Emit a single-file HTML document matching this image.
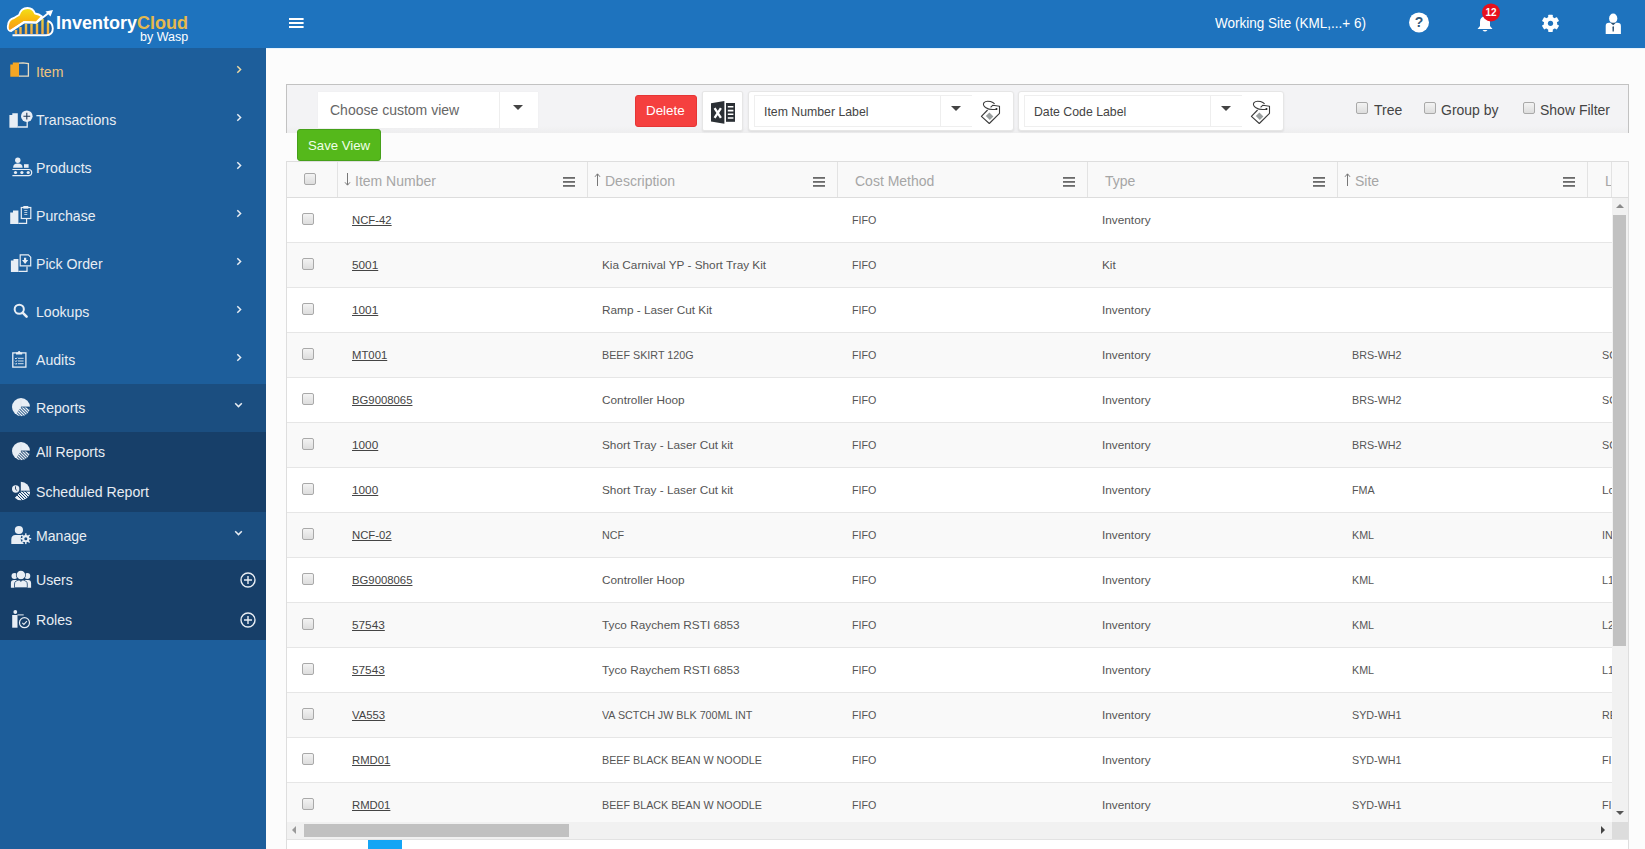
<!DOCTYPE html>
<html><head><meta charset="utf-8">
<style>
*{box-sizing:border-box;margin:0;padding:0}
html,body{width:1645px;height:849px;overflow:hidden;background:#fcfcfc;font-family:"Liberation Sans",sans-serif;position:relative}
.abs{position:absolute}
#hdr{position:absolute;left:0;top:0;width:1645px;height:48px;background:#1e73be}
#side{position:absolute;left:0;top:48px;width:266px;height:801px;background:#1d5e9b}
.st{position:absolute;left:36px;font-size:15px;line-height:20px;white-space:nowrap;transform:scaleX(0.94);transform-origin:0 0}
#tb{position:absolute;left:286px;top:84px;width:1343px;height:49px;background:linear-gradient(#f3f3f5 85%,#eeeeef);border:1px solid #c2c2c2;border-bottom:none}
#grid{position:absolute;left:286px;top:161px;width:1343px;height:700px;background:#fff;border:1px solid #dedede}
#ghead{position:absolute;left:287px;top:162px;width:1341px;height:36px;background:#f9f9f9;border-bottom:1px solid #dddddd}
.ht{position:absolute;top:173px;font-size:14px;color:#a6a6a6;white-space:nowrap;line-height:17px}
.row{position:absolute;left:287px;width:1325px;height:45px;border-bottom:1px solid #e6e6e6;overflow:hidden}
.c{position:absolute;top:15px;font-size:11.8px;color:#555;white-space:nowrap;line-height:14px;transform-origin:0 50%}
.u{transform:scaleX(0.91)}
.ul{transform:scaleX(0.96)}
.lnk{color:#444;text-decoration:underline}
.cb{position:absolute;width:12px;height:12px;border:1px solid #a9a9a9;border-radius:2px;background:linear-gradient(#f3f3f3,#dddddd)}
.row .cb{top:15px}
.wbox{position:absolute;background:#fff;border:1px solid #e6e6e6;border-radius:3px;box-shadow:0 1px 2px rgba(0,0,0,0.08)}
.tri{position:absolute;width:0;height:0;border-left:5px solid transparent;border-right:5px solid transparent;border-top:5px solid #444}
.lbl{position:absolute;font-size:14px;color:#444;white-space:nowrap;line-height:17px}
</style></head><body>
<div id="hdr">
  <svg class="abs" style="left:5px;top:5px" width="52" height="35" viewBox="5 5 52 35">
    <defs><linearGradient id="cg" x1="0" y1="0" x2="0" y2="1"><stop offset="0" stop-color="#f2e21a"/><stop offset="0.5" stop-color="#f9b90e"/><stop offset="1" stop-color="#f7981c"/></linearGradient>
    <linearGradient id="bg2" x1="0" y1="0" x2="0" y2="1"><stop offset="0" stop-color="#e6d040"/><stop offset="1" stop-color="#f2a640"/></linearGradient></defs>
    <path d="M10 31 Q7 30 8 25 Q9 19 14 18 Q17 16 19 15 Q21 8 27.5 8 Q33 8 35 13.5 Q39 14 42 16.5 L36.3 22.3 L24 22 Z" fill="url(#cg)" stroke="#fff" stroke-width="1.8" stroke-linejoin="round"/>
    <path d="M14 34 L24 23.5 L36.3 24 L46 15.5 L48 22 Q53 23 52.5 29 Q52 34.5 46 34.5 Z" fill="#1c5fa0"/>
    <path d="M16 34 V30 M20.5 34 V27 M26 34 V24 M31.5 34 V24 M37 34 V23.5 M42.5 34 V19 M48 34 V22" stroke="url(#bg2)" stroke-width="2.4"/>
    <path d="M10.4 31.4 L24 22.3 L36.3 22.7 L48.5 13" fill="none" stroke="#fff" stroke-width="2"/>
    <path d="M45.5 11.5 L53 10 L50.5 16.5 Z" fill="#fff"/>
    <path d="M12.5 35.3 L46 35.3 Q52.8 35 52.8 28.5 Q52.5 22 47.5 21" fill="none" stroke="#fff" stroke-width="1.9"/>
  </svg>
  <div class="abs" style="left:56px;top:12px;font-size:18px;font-weight:bold;color:#fff;white-space:nowrap;line-height:22px">Inventory<span style="color:#e5b94e">Cloud</span></div>
  <div class="abs" style="left:140px;top:30px;font-size:12.5px;color:#fff;white-space:nowrap;line-height:14px">by Wasp</div>
  <svg class="abs" style="left:289px;top:18px" width="15" height="10" viewBox="0 0 15 10"><rect y="0" width="14.6" height="2" fill="#fff"/><rect y="4" width="14.6" height="2" fill="#fff"/><rect y="8" width="14.6" height="2" fill="#fff"/></svg>
  <div class="abs" style="left:1215px;top:13px;font-size:14.6px;color:#fff;white-space:nowrap;line-height:20px;transform:scaleX(0.925);transform-origin:0 0">Working Site (KML,...+ 6)</div>
  <!-- help -->
  <svg class="abs" style="left:1408px;top:12px" width="22" height="21" viewBox="0 0 22 21"><circle cx="11" cy="10.4" r="10" fill="#fff"/><text x="11" y="15.4" text-anchor="middle" font-family="Liberation Sans" font-weight="bold" font-size="14" fill="#35597a">?</text></svg>
  <!-- bell -->
  <svg class="abs" style="left:1476px;top:15px" width="18" height="18" viewBox="0 0 18 18"><path d="M9 1.5 Q14 1.5 14 7 L14 11 L16.5 14 L1.5 14 L4 11 L4 7 Q4 1.5 9 1.5 Z" fill="#fff"/><path d="M6.5 15 Q9 18 11.5 15 Z" fill="#fff"/></svg>
  <svg class="abs" style="left:1481px;top:3px" width="20" height="19" viewBox="0 0 20 19"><circle cx="10" cy="9.4" r="9" fill="#e8101c"/><text x="10" y="13.2" text-anchor="middle" font-family="Liberation Sans" font-weight="bold" font-size="10" fill="#fff">12</text></svg>
  <!-- gear -->
  <svg class="abs" style="left:1541px;top:14px" width="19" height="19" viewBox="0 0 19 19"><g transform="translate(9.5 9.3)" fill="#fff"><circle r="6.6"/><rect x="-2.3" y="-8.6" width="4.6" height="17.2" rx="0.6" transform="rotate(0)"/><rect x="-2.3" y="-8.6" width="4.6" height="17.2" rx="0.6" transform="rotate(60)"/><rect x="-2.3" y="-8.6" width="4.6" height="17.2" rx="0.6" transform="rotate(120)"/></g><circle cx="9.5" cy="9.3" r="2.6" fill="#1e73be"/></svg>
  <!-- user -->
  <svg class="abs" style="left:1604px;top:12px" width="19" height="23" viewBox="0 0 19 23"><ellipse cx="9.2" cy="6.4" rx="4.1" ry="4.9" fill="#fff"/><path d="M1.7 22 L1.7 14 Q1.7 10.8 5 10.8 L13.4 10.8 Q16.9 10.8 16.9 14 L16.9 22 Z" fill="#fff"/><path d="M6.5 10.8 L9.2 13.3 L11.9 10.8 Z" fill="#2a5070"/><path d="M9.2 14 L8.4 15 L8.6 19.5 L9.8 19.5 L10 15 Z" fill="#2a5070"/></svg>
</div>
<div class="abs" style="left:266px;top:48px;width:1379px;height:1px;background:#e8f3fc"></div>
<div id="side">
  <div class="abs" style="left:0;top:336px;width:266px;height:48px;background:#1b4e80"></div>
  <div class="abs" style="left:0;top:384px;width:266px;height:80px;background:#173f69"></div>
  <div class="abs" style="left:0;top:464px;width:266px;height:48px;background:#1b4e80"></div>
  <div class="abs" style="left:0;top:512px;width:266px;height:80px;background:#173f69"></div>
</div>
<svg class="abs" style="left:6px;top:58px" width="28" height="22" viewBox="6 58 28 22"><path d="M10.3 64.5 L12.8 64.5 L12.8 62.6 L19 62.6 L19 76.8 L10.3 76.8 Z" fill="#f5a623"/><path d="M19 63.2 L23 62.8 L28.4 63.6 L28.4 76.1 L19 76.1" fill="none" stroke="#e9dcc0" stroke-width="1.3"/></svg>
<div class="st" style="top:62px;color:#efc47f">Item</div>
<svg class="abs" style="left:236px;top:65px" width="7" height="9" viewBox="0 0 7 9"><path d="M1.3 1.2 L4.6 4.5 L1.3 7.8" fill="none" stroke="#eed9a2" stroke-width="1.5"/></svg>
<svg class="abs" style="left:6px;top:106px" width="30" height="26" viewBox="6 106 30 26"><path d="M9.4 115 L12.3 115 L12.3 113.2 L17.8 113.2 L17.8 127.7 L9.4 127.7 Z" fill="#e8eef5"/><path d="M17.8 127 L27.2 127 L27.2 121" fill="none" stroke="#e8eef5" stroke-width="1.3"/><circle cx="26.8" cy="116.2" r="5.8" fill="#e8eef5"/><path d="M26.8 112.8 V119.6 M23.4 116.2 H30.2" stroke="#1f3a5a" stroke-width="1.1"/></svg>
<div class="st" style="top:110px;color:#e8edf3">Transactions</div>
<svg class="abs" style="left:236px;top:113px" width="7" height="9" viewBox="0 0 7 9"><path d="M1.3 1.2 L4.6 4.5 L1.3 7.8" fill="none" stroke="#e8edf3" stroke-width="1.5"/></svg>
<svg class="abs" style="left:8px;top:154px" width="28" height="26" viewBox="8 154 28 26"><circle cx="17.8" cy="160.3" r="2.7" fill="#e8eef5"/><path d="M13.1 167.8 Q13.1 163.6 17.8 163.6 Q22.6 163.6 22.6 167.8 Z" fill="#e8eef5"/><rect x="24" y="164.2" width="4.6" height="3.6" fill="#e8eef5"/><path d="M12.4 169.5 L28.6 169.5 Q31.7 169.5 31.7 172.5 Q31.7 175.6 28.6 175.6 L12.4 175.6" fill="none" stroke="#e8eef5" stroke-width="1.2"/><circle cx="15.5" cy="172.5" r="1.6" fill="#e8eef5"/><circle cx="21.9" cy="172.5" r="1.6" fill="#e8eef5"/><circle cx="28.2" cy="172.5" r="1.6" fill="#e8eef5"/></svg>
<div class="st" style="top:158px;color:#e8edf3">Products</div>
<svg class="abs" style="left:236px;top:161px" width="7" height="9" viewBox="0 0 7 9"><path d="M1.3 1.2 L4.6 4.5 L1.3 7.8" fill="none" stroke="#e8edf3" stroke-width="1.5"/></svg>
<svg class="abs" style="left:6px;top:202px" width="30" height="26" viewBox="6 202 30 26"><path d="M10.2 212.4 L13 212.4 L13 210.6 L18.4 210.6 L18.4 224 L10.2 224 Z" fill="#e8eef5"/><path d="M18.4 223.4 L26.6 223.4 L26.6 219" fill="none" stroke="#e8eef5" stroke-width="1.2"/><rect x="21.3" y="207.5" width="9.5" height="11" fill="#1d5e9b" stroke="#e8eef5" stroke-width="1.2"/><rect x="23.3" y="206" width="5" height="2.6" fill="#e8eef5"/><path d="M24.3 210.5 H27.3 M24.3 212.5 H27.3 M24.3 214.5 H27.3" stroke="#e8eef5" stroke-width="0.9" opacity="0.85"/></svg>
<div class="st" style="top:206px;color:#e8edf3">Purchase</div>
<svg class="abs" style="left:236px;top:209px" width="7" height="9" viewBox="0 0 7 9"><path d="M1.3 1.2 L4.6 4.5 L1.3 7.8" fill="none" stroke="#e8edf3" stroke-width="1.5"/></svg>
<svg class="abs" style="left:6px;top:250px" width="30" height="26" viewBox="6 250 30 26"><path d="M10.9 260.6 L13.5 260.6 L13.5 259 L18.4 259 L18.4 272 L10.9 272 Z" fill="#e8eef5"/><path d="M18.4 271.4 L27 271.4 L27 266.5" fill="none" stroke="#e8eef5" stroke-width="1.2"/><path d="M20.2 254.8 L28.3 254.8 L30.7 257.2 L30.7 265.8 L20.2 265.8 Z" fill="#1d5e9b" stroke="#e8eef5" stroke-width="1.2"/><path d="M24 257.8 L26.2 257.8 L26.2 260 L28.2 260 L25.1 263.9 L22 260 L24 260 Z" fill="#e8eef5"/></svg>
<div class="st" style="top:254px;color:#e8edf3">Pick Order</div>
<svg class="abs" style="left:236px;top:257px" width="7" height="9" viewBox="0 0 7 9"><path d="M1.3 1.2 L4.6 4.5 L1.3 7.8" fill="none" stroke="#e8edf3" stroke-width="1.5"/></svg>
<svg class="abs" style="left:8px;top:298px" width="24" height="24" viewBox="8 298 24 24"><circle cx="19.25" cy="309.25" r="4.6" fill="none" stroke="#e8eef5" stroke-width="2"/><path d="M22.6 312.6 L26.6 316.6" stroke="#e8eef5" stroke-width="2.6" stroke-linecap="round"/></svg>
<div class="st" style="top:302px;color:#e8edf3">Lookups</div>
<svg class="abs" style="left:236px;top:305px" width="7" height="9" viewBox="0 0 7 9"><path d="M1.3 1.2 L4.6 4.5 L1.3 7.8" fill="none" stroke="#e8edf3" stroke-width="1.5"/></svg>
<svg class="abs" style="left:8px;top:346px" width="24" height="26" viewBox="8 346 24 26"><rect x="12.8" y="352.9" width="13.1" height="14.2" fill="none" stroke="#e8eef5" stroke-width="1.3"/><path d="M16 354.6 L16 352.4 L17.6 352.4 Q19.1 349.8 20.6 352.4 L22.2 352.4 L22.2 354.6 Z" fill="#e8eef5"/><path d="M15 358 L16 359 L17 357.6 M18 358.3 H23.6 M15 360.7 L16 361.7 L17 360.3 M18 361 H23.6 M15 363.4 L16 364.4 L17 363 M18 363.7 H23.6" stroke="#e8eef5" stroke-width="0.9" fill="none"/></svg>
<div class="st" style="top:350px;color:#e8edf3">Audits</div>
<svg class="abs" style="left:236px;top:353px" width="7" height="9" viewBox="0 0 7 9"><path d="M1.3 1.2 L4.6 4.5 L1.3 7.8" fill="none" stroke="#e8edf3" stroke-width="1.5"/></svg>
<svg class="abs" style="left:10px;top:396px" width="22" height="22" viewBox="10 396 22 22"><defs><clipPath id="cp407"><path d="M21 407 L30 407 A9 9 0 0 1 15.3 414 Z"/></clipPath></defs><circle cx="21" cy="407" r="9" fill="#e8eef5"/><path d="M21 407 L30.5 407 L30.5 417 L14 417 Z" fill="#1b4e80" clip-path="url(#cp407)"/><g clip-path="url(#cp407)" stroke="#e8eef5" stroke-width="1.3"><path d="M13 404 L26 417 M16 404 L29 417 M19 404 L32 417 M22 404 L35 417 M10 404 L23 417 M7 404 L20 417"/></g><path d="M21 398 V407" stroke="#d8dde5" stroke-width="0.6"/><path d="M21 407 L30 407" stroke="#1b4e80" stroke-width="0.8"/></svg>
<div class="st" style="top:398px;color:#e8edf3">Reports</div>
<svg class="abs" style="left:234px;top:402px" width="9" height="7" viewBox="0 0 9 7"><path d="M1.2 1.3 L4.5 4.6 L7.8 1.3" fill="none" stroke="#e8edf3" stroke-width="1.5"/></svg>
<svg class="abs" style="left:10px;top:440px" width="22" height="22" viewBox="10 440 22 22"><defs><clipPath id="cp451"><path d="M21 451 L30 451 A9 9 0 0 1 15.3 458 Z"/></clipPath></defs><circle cx="21" cy="451" r="9" fill="#e8eef5"/><path d="M21 451 L30.5 451 L30.5 461 L14 461 Z" fill="#173f69" clip-path="url(#cp451)"/><g clip-path="url(#cp451)" stroke="#e8eef5" stroke-width="1.3"><path d="M13 448 L26 461 M16 448 L29 461 M19 448 L32 461 M22 448 L35 461 M10 448 L23 461 M7 448 L20 461"/></g><path d="M21 442 V451" stroke="#d8dde5" stroke-width="0.6"/><path d="M21 451 L30 451" stroke="#173f69" stroke-width="0.8"/></svg>
<div class="st" style="top:442px;color:#e8edf3">All Reports</div>
<svg class="abs" style="left:10px;top:479px" width="24" height="24" viewBox="10 479 24 24"><defs><clipPath id="cps"><path d="M21 491 L30.2 491 A9.2 9.2 0 0 1 14.5 497.5 Z"/></clipPath></defs><path d="M20.8 491 L20.8 481.8 A9.2 9.2 0 0 1 30 491 Z" fill="#e8eef5"/><path d="M21 491 L30.5 491 L30.5 501 L12 501 Z" fill="#e8eef5" clip-path="url(#cps)"/><g clip-path="url(#cps)" stroke="#173f69" stroke-width="1"><path d="M10 488 L23 501 M13 488 L26 501 M16 488 L29 501 M19 488 L32 501 M22 488 L35 501"/></g><path d="M20.8 491.2 H31" stroke="#173f69" stroke-width="0.9"/><circle cx="15.7" cy="489" r="4.4" fill="#173f69"/><circle cx="15.7" cy="489" r="3.7" fill="#e8eef5"/><path d="M15.5 486.3 V489.3 L17.2 490.6" stroke="#1f3a5a" stroke-width="0.9" fill="none"/></svg>
<div class="st" style="top:482px;color:#e8edf3">Scheduled Report</div>
<svg class="abs" style="left:8px;top:523px" width="26" height="26" viewBox="8 523 26 26"><circle cx="18.9" cy="530" r="4.1" fill="#e8eef5"/><path d="M11.3 544 L11.3 539.5 Q11.3 535 15.5 535 L22 535 Q24 535 24 538 L24 544 Z" fill="#e8eef5"/><circle cx="25.8" cy="538.7" r="5.2" fill="#1b4e80"/><g fill="#e8eef5"><rect x="25.1" y="533.3" width="1.4" height="10.8" transform="rotate(0 25.8 538.7)"/><rect x="25.1" y="533.3" width="1.4" height="10.8" transform="rotate(45 25.8 538.7)"/><rect x="25.1" y="533.3" width="1.4" height="10.8" transform="rotate(90 25.8 538.7)"/><rect x="25.1" y="533.3" width="1.4" height="10.8" transform="rotate(135 25.8 538.7)"/></g><circle cx="25.8" cy="538.7" r="3.6" fill="#e8eef5"/><circle cx="25.8" cy="538.7" r="1.5" fill="#1b4e80"/></svg>
<div class="st" style="top:526px;color:#e8edf3">Manage</div>
<svg class="abs" style="left:234px;top:530px" width="9" height="7" viewBox="0 0 9 7"><path d="M1.2 1.3 L4.5 4.6 L7.8 1.3" fill="none" stroke="#e8edf3" stroke-width="1.5"/></svg>
<svg class="abs" style="left:8px;top:567px" width="26" height="24" viewBox="8 567 26 24"><circle cx="14.5" cy="576" r="3" fill="#e8eef5"/><circle cx="27.3" cy="576" r="3" fill="#e8eef5"/><path d="M10.9 587.7 L10.9 583 Q10.9 580 14 580 L28 580 Q31.1 580 31.1 583 L31.1 587.7 Z" fill="#e8eef5"/><circle cx="20.9" cy="575" r="5" fill="#173f69"/><circle cx="20.9" cy="575" r="4.3" fill="#e8eef5"/><path d="M14.5 587.7 L14.5 584 Q14.5 580 20.9 580 Q27.3 580 27.3 584 L27.3 587.7 Z" fill="#e8eef5" stroke="#173f69" stroke-width="0.8"/><path d="M19.5 580.2 L20.9 582 L22.3 580.2 Z" fill="#173f69"/></svg>
<div class="st" style="top:570px;color:#e8edf3">Users</div>
<svg class="abs" style="left:240px;top:572px" width="16" height="16" viewBox="0 0 16 16"><circle cx="8" cy="8" r="7" fill="none" stroke="#e8edf3" stroke-width="1.4"/><path d="M8 4 V12 M4 8 H12" stroke="#e8edf3" stroke-width="1.4"/></svg>
<svg class="abs" style="left:8px;top:607px" width="26" height="24" viewBox="8 607 26 24"><circle cx="15.3" cy="612" r="1.9" fill="#e8eef5"/><rect x="12.2" y="615" width="5.3" height="12.7" fill="#e8eef5"/><path d="M17.5 614.9 H23.7" stroke="#e8eef5" stroke-width="1"/><circle cx="24.5" cy="622.7" r="5" fill="none" stroke="#e8eef5" stroke-width="1.2"/><path d="M22.3 622.8 L23.9 624.4 L26.9 621.2" stroke="#e8eef5" stroke-width="1.1" fill="none"/></svg>
<div class="st" style="top:610px;color:#e8edf3">Roles</div>
<svg class="abs" style="left:240px;top:612px" width="16" height="16" viewBox="0 0 16 16"><circle cx="8" cy="8" r="7" fill="none" stroke="#e8edf3" stroke-width="1.4"/><path d="M8 4 V12 M4 8 H12" stroke="#e8edf3" stroke-width="1.4"/></svg>
<div id="tb"></div>
<!-- choose custom view -->
<div class="abs" style="left:318px;top:92px;width:220px;height:36px;background:#fff;box-shadow:0 0 1px rgba(0,0,0,0.06)"></div>
<div class="abs" style="left:499px;top:92px;width:1px;height:36px;background:#eeeeee"></div>
<div class="lbl" style="left:330px;top:102px;color:#666">Choose custom view</div>
<div class="tri" style="left:513px;top:105px;border-top-color:#444"></div>
<!-- delete -->
<div class="abs" style="left:635px;top:95px;width:62px;height:32px;background:#f5403f;border-radius:3px;border:1px solid #e53535"></div>
<div class="abs" style="left:646px;top:102px;font-size:13.4px;color:#fff;line-height:17px;white-space:nowrap">Delete</div>
<!-- excel -->
<div class="wbox" style="left:702px;top:91px;width:41px;height:40px;border-radius:2px"></div>
<svg class="abs" style="left:708px;top:98px" width="30" height="28" viewBox="708 98 30 28"><path d="M711 103.2 L724.4 101 L724.4 123.7 L711 121.5 Z" fill="#2b3035"/><rect x="726" y="103" width="9" height="18.8" fill="#2b3035"/><path d="M727.8 106.8 H733.4 M727.8 110.6 H733.4 M727.8 114.3 H733.4 M727.8 118 H733.4" stroke="#fff" stroke-width="1.6"/><path d="M714.6 108.2 L720.9 117.8 M720.9 108.2 L714.6 117.8" stroke="#fff" stroke-width="2.3"/></svg>
<!-- item number label -->
<div class="wbox" style="left:748px;top:91px;width:266px;height:40px"></div>
<div class="abs" style="left:754px;top:95px;width:218px;height:32px;border:1px solid #efefef;border-right:none;background:#fff"></div>
<div class="abs" style="left:940px;top:96px;width:1px;height:31px;background:#eeeeee"></div>
<div class="abs" style="left:764px;top:104px;font-size:12.8px;color:#444;line-height:16px;white-space:nowrap;transform:scaleX(0.96);transform-origin:0 0">Item Number Label</div>
<div class="tri" style="left:951px;top:106px"></div>
<svg class="abs" style="left:978px;top:98px" width="26" height="28" viewBox="978 98 26 28"><g transform="translate(0 0)"><path d="M987.6 110 L981.4 116.4 L989.3 123.5 L999.5 113.3 L999.5 106.2 L992.9 105.2 L990.6 107.3" fill="none" stroke="#3a3a3a" stroke-width="1.1" stroke-linejoin="round"/><path d="M996.4 109.2 Q990 110.5 985.5 107.5 Q982.3 105 984 102.6 Q986 100.4 990.5 101.6 Q993.2 102.5 994.6 103.8" fill="none" stroke="#3a3a3a" stroke-width="1.05"/><circle cx="996.5" cy="109" r="1" fill="#222"/><path d="M985.8 117.2 L989.4 113.6 L993.4 117.6 L989.8 121.2 Z" fill="#9a9f9f" transform="translate(0 -1.2)"/></g></svg>
<!-- date code label -->
<div class="wbox" style="left:1018px;top:91px;width:266px;height:40px"></div>
<div class="abs" style="left:1024px;top:95px;width:218px;height:32px;border:1px solid #efefef;border-right:none;background:#fff"></div>
<div class="abs" style="left:1210px;top:96px;width:1px;height:31px;background:#eeeeee"></div>
<div class="abs" style="left:1034px;top:104px;font-size:12.8px;color:#444;line-height:16px;white-space:nowrap;transform:scaleX(0.96);transform-origin:0 0">Date Code Label</div>
<div class="tri" style="left:1221px;top:106px"></div>
<svg class="abs" style="left:1248px;top:98px" width="26" height="28" viewBox="978 98 26 28"><g transform="translate(0 0)"><path d="M987.6 110 L981.4 116.4 L989.3 123.5 L999.5 113.3 L999.5 106.2 L992.9 105.2 L990.6 107.3" fill="none" stroke="#3a3a3a" stroke-width="1.1" stroke-linejoin="round"/><path d="M996.4 109.2 Q990 110.5 985.5 107.5 Q982.3 105 984 102.6 Q986 100.4 990.5 101.6 Q993.2 102.5 994.6 103.8" fill="none" stroke="#3a3a3a" stroke-width="1.05"/><circle cx="996.5" cy="109" r="1" fill="#222"/><path d="M985.8 117.2 L989.4 113.6 L993.4 117.6 L989.8 121.2 Z" fill="#9a9f9f" transform="translate(0 -1.2)"/></g></svg>
<!-- checkboxes -->
<div class="cb" style="left:1356px;top:102px"></div>
<div class="lbl" style="left:1374px;top:102px">Tree</div>
<div class="cb" style="left:1424px;top:102px"></div>
<div class="lbl" style="left:1441px;top:102px">Group by</div>
<div class="cb" style="left:1523px;top:102px"></div>
<div class="lbl" style="left:1540px;top:102px">Show Filter</div>
<!-- save view -->
<div class="abs" style="left:297px;top:129px;width:84px;height:32px;background:#55b81b;border-radius:3px;border:1px solid #46a01a"></div>
<div class="abs" style="left:308px;top:137px;font-size:13.2px;color:#f0ffe8;line-height:17px;white-space:nowrap">Save View</div>
<div id="grid"></div>
<div id="ghead"></div>
<div class="cb" style="left:304px;top:173px"></div>
<div class="abs" style="left:337px;top:162px;width:1px;height:35px;background:#e3e3e3"></div>
<svg class="abs" style="left:344px;top:173px" width="7" height="13" viewBox="0 0 7 13"><path d="M3.5 0 V12 M1 9.3 L3.5 12.2 L6 9.3" fill="none" stroke="#777" stroke-width="1"/></svg>
<div class="ht" style="left:355px">Item Number</div>
<svg class="abs" style="left:563px;top:177px" width="12" height="10" viewBox="0 0 12 10"><rect x="0" y="0" width="12" height="1.8" fill="#6a6a6a"/><rect x="0" y="4" width="12" height="1.8" fill="#6a6a6a"/><rect x="0" y="8" width="12" height="1.8" fill="#6a6a6a"/></svg>
<div class="abs" style="left:587px;top:162px;width:1px;height:35px;background:#e3e3e3"></div>
<svg class="abs" style="left:594px;top:173px" width="7" height="13" viewBox="0 0 7 13"><path d="M3.5 13 V1 M1 3.8 L3.5 0.8 L6 3.8" fill="none" stroke="#777" stroke-width="1"/></svg>
<div class="ht" style="left:605px">Description</div>
<svg class="abs" style="left:813px;top:177px" width="12" height="10" viewBox="0 0 12 10"><rect x="0" y="0" width="12" height="1.8" fill="#6a6a6a"/><rect x="0" y="4" width="12" height="1.8" fill="#6a6a6a"/><rect x="0" y="8" width="12" height="1.8" fill="#6a6a6a"/></svg>
<div class="abs" style="left:837px;top:162px;width:1px;height:35px;background:#e3e3e3"></div>
<div class="ht" style="left:855px">Cost Method</div>
<svg class="abs" style="left:1063px;top:177px" width="12" height="10" viewBox="0 0 12 10"><rect x="0" y="0" width="12" height="1.8" fill="#6a6a6a"/><rect x="0" y="4" width="12" height="1.8" fill="#6a6a6a"/><rect x="0" y="8" width="12" height="1.8" fill="#6a6a6a"/></svg>
<div class="abs" style="left:1087px;top:162px;width:1px;height:35px;background:#e3e3e3"></div>
<div class="ht" style="left:1105px">Type</div>
<svg class="abs" style="left:1313px;top:177px" width="12" height="10" viewBox="0 0 12 10"><rect x="0" y="0" width="12" height="1.8" fill="#6a6a6a"/><rect x="0" y="4" width="12" height="1.8" fill="#6a6a6a"/><rect x="0" y="8" width="12" height="1.8" fill="#6a6a6a"/></svg>
<div class="abs" style="left:1337px;top:162px;width:1px;height:35px;background:#e3e3e3"></div>
<svg class="abs" style="left:1344px;top:173px" width="7" height="13" viewBox="0 0 7 13"><path d="M3.5 13 V1 M1 3.8 L3.5 0.8 L6 3.8" fill="none" stroke="#777" stroke-width="1"/></svg>
<div class="ht" style="left:1355px">Site</div>
<svg class="abs" style="left:1563px;top:177px" width="12" height="10" viewBox="0 0 12 10"><rect x="0" y="0" width="12" height="1.8" fill="#6a6a6a"/><rect x="0" y="4" width="12" height="1.8" fill="#6a6a6a"/><rect x="0" y="8" width="12" height="1.8" fill="#6a6a6a"/></svg>
<div class="abs" style="left:1587px;top:162px;width:1px;height:35px;background:#e3e3e3"></div>
<div class="ht" style="left:1605px;width:7px;overflow:hidden">L</div>
<div class="abs" style="left:1611px;top:162px;width:1px;height:35px;background:#e3e3e3"></div>
<div class="row" style="top:198px;background:#ffffff"><span class="cb" style="left:15px"></span><span class="c lnk ul" style="left:65px">NCF-42</span><span class="c" style="left:315px"></span><span class="c u" style="left:565px">FIFO</span><span class="c" style="left:815px">Inventory</span><span class="c" style="left:1065px"></span><span class="c" style="left:1315px"></span></div>
<div class="row" style="top:243px;background:#f9f9f9"><span class="cb" style="left:15px"></span><span class="c lnk" style="left:65px">5001</span><span class="c" style="left:315px">Kia Carnival YP - Short Tray Kit</span><span class="c u" style="left:565px">FIFO</span><span class="c" style="left:815px">Kit</span><span class="c" style="left:1065px"></span><span class="c" style="left:1315px"></span></div>
<div class="row" style="top:288px;background:#ffffff"><span class="cb" style="left:15px"></span><span class="c lnk" style="left:65px">1001</span><span class="c" style="left:315px">Ramp - Laser Cut Kit</span><span class="c u" style="left:565px">FIFO</span><span class="c" style="left:815px">Inventory</span><span class="c" style="left:1065px"></span><span class="c" style="left:1315px"></span></div>
<div class="row" style="top:333px;background:#f9f9f9"><span class="cb" style="left:15px"></span><span class="c lnk ul" style="left:65px">MT001</span><span class="c u" style="left:315px">BEEF SKIRT 120G</span><span class="c u" style="left:565px">FIFO</span><span class="c" style="left:815px">Inventory</span><span class="c u" style="left:1065px">BRS-WH2</span><span class="c u" style="left:1315px">SC</span></div>
<div class="row" style="top:378px;background:#ffffff"><span class="cb" style="left:15px"></span><span class="c lnk ul" style="left:65px">BG9008065</span><span class="c" style="left:315px">Controller Hoop</span><span class="c u" style="left:565px">FIFO</span><span class="c" style="left:815px">Inventory</span><span class="c u" style="left:1065px">BRS-WH2</span><span class="c u" style="left:1315px">SC</span></div>
<div class="row" style="top:423px;background:#f9f9f9"><span class="cb" style="left:15px"></span><span class="c lnk" style="left:65px">1000</span><span class="c" style="left:315px">Short Tray - Laser Cut kit</span><span class="c u" style="left:565px">FIFO</span><span class="c" style="left:815px">Inventory</span><span class="c u" style="left:1065px">BRS-WH2</span><span class="c u" style="left:1315px">SC</span></div>
<div class="row" style="top:468px;background:#ffffff"><span class="cb" style="left:15px"></span><span class="c lnk" style="left:65px">1000</span><span class="c" style="left:315px">Short Tray - Laser Cut kit</span><span class="c u" style="left:565px">FIFO</span><span class="c" style="left:815px">Inventory</span><span class="c u" style="left:1065px">FMA</span><span class="c" style="left:1315px">Lo</span></div>
<div class="row" style="top:513px;background:#f9f9f9"><span class="cb" style="left:15px"></span><span class="c lnk ul" style="left:65px">NCF-02</span><span class="c u" style="left:315px">NCF</span><span class="c u" style="left:565px">FIFO</span><span class="c" style="left:815px">Inventory</span><span class="c u" style="left:1065px">KML</span><span class="c u" style="left:1315px">IN</span></div>
<div class="row" style="top:558px;background:#ffffff"><span class="cb" style="left:15px"></span><span class="c lnk ul" style="left:65px">BG9008065</span><span class="c" style="left:315px">Controller Hoop</span><span class="c u" style="left:565px">FIFO</span><span class="c" style="left:815px">Inventory</span><span class="c u" style="left:1065px">KML</span><span class="c u" style="left:1315px">L1</span></div>
<div class="row" style="top:603px;background:#f9f9f9"><span class="cb" style="left:15px"></span><span class="c lnk" style="left:65px">57543</span><span class="c" style="left:315px">Tyco Raychem RSTI 6853</span><span class="c u" style="left:565px">FIFO</span><span class="c" style="left:815px">Inventory</span><span class="c u" style="left:1065px">KML</span><span class="c u" style="left:1315px">L2</span></div>
<div class="row" style="top:648px;background:#ffffff"><span class="cb" style="left:15px"></span><span class="c lnk" style="left:65px">57543</span><span class="c" style="left:315px">Tyco Raychem RSTI 6853</span><span class="c u" style="left:565px">FIFO</span><span class="c" style="left:815px">Inventory</span><span class="c u" style="left:1065px">KML</span><span class="c u" style="left:1315px">L1</span></div>
<div class="row" style="top:693px;background:#f9f9f9"><span class="cb" style="left:15px"></span><span class="c lnk ul" style="left:65px">VA553</span><span class="c u" style="left:315px">VA SCTCH JW BLK 700ML INT</span><span class="c u" style="left:565px">FIFO</span><span class="c" style="left:815px">Inventory</span><span class="c u" style="left:1065px">SYD-WH1</span><span class="c u" style="left:1315px">RE</span></div>
<div class="row" style="top:738px;background:#ffffff"><span class="cb" style="left:15px"></span><span class="c lnk ul" style="left:65px">RMD01</span><span class="c u" style="left:315px">BEEF BLACK BEAN W NOODLE</span><span class="c u" style="left:565px">FIFO</span><span class="c" style="left:815px">Inventory</span><span class="c u" style="left:1065px">SYD-WH1</span><span class="c u" style="left:1315px">FI</span></div>
<div class="row" style="top:783px;background:#f9f9f9"><span class="cb" style="left:15px"></span><span class="c lnk ul" style="left:65px">RMD01</span><span class="c u" style="left:315px">BEEF BLACK BEAN W NOODLE</span><span class="c u" style="left:565px">FIFO</span><span class="c" style="left:815px">Inventory</span><span class="c u" style="left:1065px">SYD-WH1</span><span class="c u" style="left:1315px">FI</span></div>
<!-- vertical scrollbar -->
<div class="abs" style="left:1612px;top:198px;width:16px;height:624px;background:#f1f1f1"></div>
<div class="abs" style="left:1613px;top:215px;width:13px;height:431px;background:#c1c1c1"></div>
<div class="tri" style="left:1616px;top:204px;border-top:none;border-bottom:4px solid #8a8a8a;border-left-width:4px;border-right-width:4px"></div>
<div class="tri" style="left:1616px;top:811px;border-top:4px solid #555;border-left-width:4px;border-right-width:4px"></div>
<!-- horizontal scrollbar -->
<div class="abs" style="left:287px;top:822px;width:1325px;height:17px;background:#f1f1f1"></div>
<div class="abs" style="left:1612px;top:822px;width:16px;height:17px;background:#dcdcdc"></div>
<div class="abs" style="left:304px;top:824px;width:265px;height:13px;background:#c1c1c1"></div>
<div class="tri" style="left:292px;top:826px;border-right:4px solid #999;border-top:4px solid transparent;border-bottom:4px solid transparent;border-left:none"></div>
<div class="tri" style="left:1601px;top:826px;border-left:4px solid #444;border-top:4px solid transparent;border-bottom:4px solid transparent;border-right:none"></div>
<div class="abs" style="left:287px;top:839px;width:1341px;height:1px;background:#e2e2e2"></div>
<div class="abs" style="left:368px;top:840px;width:34px;height:9px;background:#14a5f5"></div>
</body></html>
